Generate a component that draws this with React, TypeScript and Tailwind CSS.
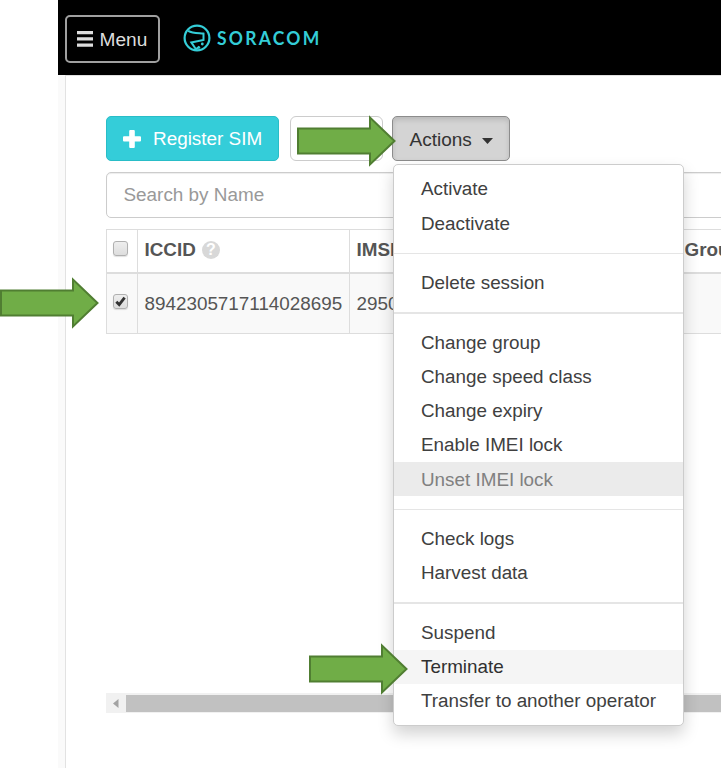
import React from "react";

const groups: string[][] = [
  ["Activate", "Deactivate"],
  ["Delete session"],
  ["Change group", "Change speed class", "Change expiry", "Enable IMEI lock", "Unset IMEI lock"],
  ["Check logs", "Harvest data"],
  ["Suspend", "Terminate", "Transfer to another operator"],
];

function itemStyle(label: string) {
  if (label === "Unset IMEI lock") return "bg-[#ebebeb] text-[#808080]";
  if (label === "Terminate") return "bg-[#f5f5f5] text-[#303030]";
  return "text-[#404040]";
}

function Arrow({ className }: { className: string }) {
  return (
    <svg className={"absolute z-20 h-[52px] w-[99px] " + className} viewBox="0 0 99 52">
      <path d="M1 13.5H73V2.5L97.5 26L73 49.5V38.5H1Z" fill="#70ad47" stroke="#507e32" strokeWidth="2" />
    </svg>
  );
}

function Logo() {
  return (
    <div className="flex items-center text-[#34cdd7]">
      <svg className="h-[28px] w-[28px]" viewBox="0 0 28 28" fill="none" stroke="currentColor" strokeWidth="2">
        <circle cx="14" cy="14" r="12.4" strokeWidth="2.2" />
        <path d="M5.2 6.8C9.5 9.3 15.5 9 20.5 9.6V16L8.3 18.4L13 25.2L16.3 22.6" />
        <circle cx="19.3" cy="20" r="1.4" fill="currentColor" stroke="none" />
        <circle cx="16" cy="23.5" r="1.2" fill="currentColor" stroke="none" />
      </svg>
      <span className="ml-[6px] origin-left scale-x-[0.89] font-['Lato',sans-serif] text-[19.7px] leading-[28px] font-bold tracking-[2.5px]">SORACOM</span>
    </div>
  );
}

function Check({ checked }: { checked?: boolean }) {
  return (
    <div className="flex h-[15px] w-[15px] items-center justify-center rounded-[3px] border border-[#b0b0b0] bg-linear-to-b from-[#eeeeee] to-[#dddddd] shadow-[0_1px_1px_rgba(0,0,0,0.12)]">
      {checked && (
        <svg className="h-[11px] w-[11px]" viewBox="0 0 11 11" fill="none" stroke="#333" strokeWidth="2.8">
          <path d="M1.3 5.8L4.2 8.6L9.6 1.6" />
        </svg>
      )}
    </div>
  );
}

export default function App() {
  return (
    <div className="relative h-[768px] w-[721px] overflow-hidden bg-white pl-[58px] font-['Liberation_Sans',Arial,sans-serif] text-[18.85px] text-[#555]">
      <header className="flex h-[75px] items-start bg-black">
        <button className="mt-[15px] ml-[6.5px] flex h-[48px] w-[95px] items-center rounded-[5px] border-2 border-[#a0a0a0] pl-[10.5px] text-[#ddd]">
          <svg className="h-[16px] w-[16px]" viewBox="0 0 16 16" fill="currentColor">
            <path d="M0 0H16V3.3H0ZM0 6.2H16V9.5H0ZM0 12.4H16V15.7H0Z" />
          </svg>
          <span className="ml-[6.5px] pt-[2px] text-[19.1px]">Menu</span>
        </button>
        <div className="mt-[24px] ml-[23px]">
          <Logo />
        </div>
      </header>

      <div className="flex h-[693px]">
        <div className="w-[8px] shrink-0 border-r border-[#e2e2e2] bg-[#fafafa]" />
        <main className="w-[720px] shrink-0 border-t border-[#e0e0e0] pl-[40px]">
          <div className="flex pt-[40px]">
            <button className="flex h-[45px] w-[173px] items-center rounded-[5px] border border-[#29bdc7] bg-[#34cdd9] pl-[16px] text-white">
              <svg className="h-[18px] w-[18px]" viewBox="0 0 18 18" fill="currentColor">
                <path d="M6.2 1Q6.2 0 7.2 0H10.8Q11.8 0 11.8 1V6.3H17Q18 6.3 18 7.3V10.5Q18 11.5 17 11.5H11.8V17Q11.8 18 10.8 18H7.2Q6.2 18 6.2 17V11.5H1Q0 11.5 0 10.5V7.3Q0 6.3 1 6.3H6.2Z" />
              </svg>
              <span className="ml-[12px] pt-[2px] text-[18.9px] whitespace-nowrap">Register SIM</span>
            </button>
            <div className="ml-[10.5px] h-[45px] w-[93px] rounded-[6px] border-[1.5px] border-[#ccc] bg-white" />
            <button className="ml-[9px] flex h-[45px] w-[118.5px] items-center rounded-[5px] border-[1.5px] border-[#8c8c8c] bg-[#d4d4d4] pl-[17px] text-[#333] shadow-[inset_0_3px_5px_rgba(0,0,0,0.125)]">
              <span className="pt-[3px] text-[19px]">Actions</span>
              <svg className="mt-[5px] ml-[10.5px] h-[6px] w-[11px]" viewBox="0 0 11 6" fill="#333">
                <path d="M0 0H11L5.5 6Z" />
              </svg>
            </button>
          </div>
          <div className="mt-[11px] flex h-[46px] items-center rounded-[5px] border-[1.5px] border-[#ccc] pl-[16.5px] text-[18.9px] text-[#999] shadow-[inset_0_1px_1px_rgba(0,0,0,0.075)]">
            Search by Name
          </div>
          <div className="mt-[11px] border border-[#ddd]">
            <div className="flex h-[44px] border-b-2 border-[#ddd] font-bold">
              <div className="w-[31px] shrink-0 border-r border-[#ddd] pt-[11px] pl-[6px]"><Check /></div>
              <div className="flex w-[212px] shrink-0 items-center border-r border-[#ddd] pb-px pl-[6.5px]">
                <span>ICCID</span>
                <span className="mb-[2px] ml-[6px] flex h-[18px] w-[18px] items-center justify-center rounded-full bg-[#d8d8d8] text-[16px] leading-none text-white">?</span>
              </div>
              <div className="flex w-[334.5px] shrink-0 items-center pb-px pl-[6.5px]">IMSI</div>
              <div className="flex items-center pb-px">Group</div>
            </div>
            <div className="flex h-[59px] bg-[#f9f9f9]">
              <div className="w-[31px] shrink-0 border-r border-[#ddd] pt-[20px] pl-[6px]"><Check checked /></div>
              <div className="flex w-[212px] shrink-0 items-center border-r border-[#ddd] pt-px pl-[6.5px]">8942305717114028695</div>
              <div className="flex items-center pt-px pl-[6.5px]">295050</div>
            </div>
          </div>
          <div className="mt-[359px] flex h-[20px] bg-[#f1f1f1]">
            <div className="flex w-[20px] items-center pl-[7px]">
              <svg className="h-[9px] w-[6px]" viewBox="0 0 6 9" fill="#a3a3a3"><path d="M5.5 0V9L0 4.5Z" /></svg>
            </div>
            <div className="mt-[2px] mb-px grow bg-[#c1c1c1]" />
          </div>
        </main>
      </div>

      <div className="absolute top-[164px] left-[392.5px] z-10 h-[562px] w-[291.5px] rounded-[5px] border-[1.5px] border-[#ccc] bg-white pt-[7px] shadow-[0_8px_16px_rgba(0,0,0,0.175)]">
        {groups.map((group, i) => (
          <div key={i}>
            {i > 0 && <div className="h-[25.4px] pt-[12.3px]"><div className="h-[1.5px] bg-[#e5e5e5]" /></div>}
            {group.map((label) => (
              <div key={label} className={"flex h-[34.2px] items-center pt-px pl-[27.5px] whitespace-nowrap " + itemStyle(label)}>{label}</div>
            ))}
          </div>
        ))}
      </div>

      <Arrow className="top-[277px] left-0" />
      <Arrow className="top-[115px] left-[297px]" />
      <Arrow className="top-[643px] left-[309px]" />
    </div>
  );
}
